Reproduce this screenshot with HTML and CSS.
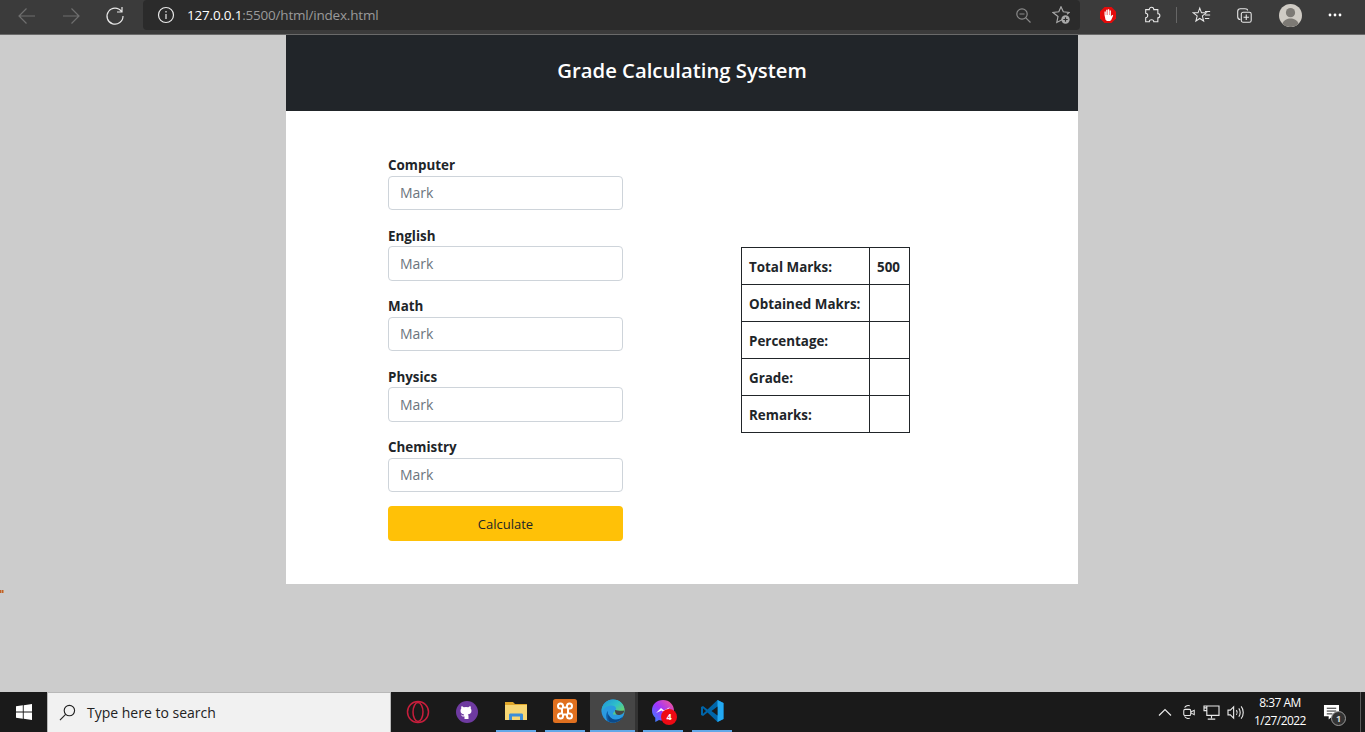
FILE: index.html
```html
<!DOCTYPE html>
<html lang="en">
  <head>
    <meta charset="utf-8">
    <title>Grade Calculating System</title>
    <link rel="stylesheet" href="styles.css">
  </head>
  <body>
    <!-- browser toolbar -->
    <div class="chrome">
      <div class="nav">
        <svg class="ic dim" viewBox="0 0 20 20"><path d="M18 10H2M9.500 2.500 2 10l7.500 7.500"/></svg>
        <svg class="ic dim" viewBox="0 0 20 20"><path d="M2 10h16M10.500 2.500 18 10l-7.500 7.500"/></svg>
        <svg class="ic" viewBox="0 0 20 20"><path d="M16.500 5.500A8 8 0 1 0 18 10M17 1v5h-5"/></svg>
      </div>
      <div class="address">
        <svg class="ic info" viewBox="0 0 18 18"><circle cx="9" cy="9" r="7.500"/><path d="M9 8v5M9 5v1.500"/></svg>
        <span class="url"><b>127.0.0.1</b>:5500/html/index.html</span>
        <span class="address-end">
          <svg class="ic zoom-ic" viewBox="0 0 15 15"><circle cx="6" cy="6" r="5.200"/><path d="M3.500 6h5M9.800 9.800 14.500 14.500"/></svg>
          <svg class="ic fav-add" viewBox="0 0 18 18"><path d="M10.500 13.500 4.800 16.500 6 10.500 1 6.500 6.800 5.800 9 .8l2.300 5 5.700.7-2 1.800"/><circle class="solid-grey" cx="13.500" cy="13.500" r="4.200"/><path class="plus" d="M13.500 11.300v4.400M11.300 13.500h4.400"/></svg>
        </span>
      </div>
      <div class="tools">
        <svg class="stop" viewBox="0 0 18 18"><path class="stop-bg" d="M5.500 1h7L17 5.500v7L12.500 17h-7L1 12.500v-7z"/><path class="stop-hand" d="M5.500 9V5.500h1.300V9h.4V3.800h1.300V9h.4V3.300h1.300V9h.4V4.500h1.300v6l1.300-1.700 1 .6-2 4.600-1.200.9H8l-1.500-1.200z"/></svg>
        <svg class="ic puzzle" viewBox="0 0 20 20"><path d="M7 4c0-3.500 5-3.500 5 0h4.500v4.500c3 0 3 4.500 0 4.500v4.500H12c0-3-5-3-5 0H3v-4.500c3 0 3-5 0-5V4z"/></svg>
        <span class="tool-sep"></span>
        <svg class="ic favs" viewBox="0 0 22 20"><path d="M9 2l2 5.500h5.500L12 11l1.500 6L9 14l-4.500 3L6 11 1.500 7.500H7zM15 6h6M15 10h6M15 14h5"/></svg>
        <svg class="ic collect" viewBox="0 0 20 20"><path d="M6 15c-2 0-3-1-3-3V6c0-2 1-3 3-3h5c2 0 3 1 3 2"/><rect x="7" y="7" width="11" height="11" rx="2"/><path d="M12.500 9.500v6M9.500 12.500h6"/></svg>
        <svg class="avatar" viewBox="0 0 24 24"><circle class="avatar-bg" cx="12" cy="12" r="12"/><circle class="avatar-fg" cx="12" cy="9" r="4.800"/><path class="avatar-fg" d="M3.500 20.500c1.500-4 5-5.500 8.500-5.500s7 1.500 8.500 5.500A12 12 0 0 1 3.500 20.500z"/></svg>
        <svg class="dots" viewBox="0 0 14 4"><circle cx="2" cy="2" r="1.400"/><circle cx="7" cy="2" r="1.400"/><circle cx="12" cy="2" r="1.400"/></svg>
      </div>
    </div>

    <!-- the page itself -->
    <main class="page">
      <span class="speck"></span>
      <section class="card">
        <h1 class="card-title">Grade Calculating System</h1>
        <div class="card-body">
          <form class="marks">
            <div class="field">
              <label for="computer">Computer</label>
              <input id="computer" type="text" placeholder="Mark">
            </div>
            <div class="field">
              <label for="english">English</label>
              <input id="english" type="text" placeholder="Mark">
            </div>
            <div class="field">
              <label for="math">Math</label>
              <input id="math" type="text" placeholder="Mark">
            </div>
            <div class="field">
              <label for="physics">Physics</label>
              <input id="physics" type="text" placeholder="Mark">
            </div>
            <div class="field">
              <label for="chemistry">Chemistry</label>
              <input id="chemistry" type="text" placeholder="Mark">
            </div>
            <button class="calc" type="button">Calculate</button>
          </form>
          <table class="result">
            <tr><th>Total Marks:</th><th class="val">500</th></tr>
            <tr><th>Obtained Makrs:</th><td class="val"></td></tr>
            <tr><th>Percentage:</th><td class="val"></td></tr>
            <tr><th>Grade:</th><td class="val"></td></tr>
            <tr><th>Remarks:</th><td class="val"></td></tr>
          </table>
        </div>
      </section>
    </main>

    <!-- windows taskbar -->
    <footer class="taskbar">
      <div class="start">
        <svg class="win" viewBox="0 0 16 16"><path d="M0 2.300 6.800 1.300V7.600H0zM7.700 1.200 16 0V7.600H7.700zM0 8.400H6.800V14.700L0 13.700zM7.700 8.400H16V16L7.700 14.800z"/></svg>
      </div>
      <div class="search">
        <svg class="ic lens" viewBox="0 0 18 18"><circle cx="11" cy="7" r="5.500"/><path d="M7 11 1 17"/></svg>
        <span>Type here to search</span>
      </div>
      <div class="apps">
        <span class="app">
          <svg viewBox="0 0 24 24"><circle class="opera" cx="12" cy="12" r="10.500"/><ellipse class="opera" cx="12" cy="12" rx="5" ry="9.500"/></svg>
        </span>
        <span class="app">
          <svg viewBox="0 0 24 24"><circle class="gh-bg" cx="12" cy="12" r="11"/><path class="gh-cat" d="M9.500 19v-2.500c-2.500.5-3-1-3.500-2 1 .3 1.500 1 2.500 1.300 0-.6.300-1 .7-1.300-2.500-.3-3.700-1.500-3.700-3.700 0-1 .3-1.700.8-2.300-.2-.6-.2-1.400.1-2.200 1 0 1.700.5 2.400 1a8 8 0 0 1 4.400 0c.7-.5 1.400-1 2.400-1 .3.800.3 1.600.1 2.200.5.600.8 1.300.8 2.300 0 2.200-1.200 3.400-3.700 3.700.5.400.7 1 .7 1.700V19z"/></svg>
        </span>
        <span class="app open">
          <svg viewBox="0 0 24 24"><path class="folder-back" d="M1 3h8l2 2h12v4H1z"/><path class="folder-front" d="M1 6h22v15H1z"/><path class="folder-blue" d="M5 21v-5c0-1 .5-1.500 1.500-1.500h11c1 0 1.500.5 1.500 1.500v5h-3v-3.500H8V21z"/></svg>
        </span>
        <span class="app open app-last">
          <svg viewBox="0 0 24 24"><rect class="xampp-bg" width="24" height="24" rx="2.500"/><path class="xampp-x" d="M9 9.500H7.500a2.500 2.500 0 1 1 2.500-2.500v1.500h4V7a2.500 2.500 0 1 1 2.500 2.500H15v5h1.500A2.500 2.500 0 1 1 14 17v-1.500h-4V17a2.500 2.500 0 1 1-2.500-2.500H9z"/></svg>
        </span>
        <span class="app open active">
          <svg viewBox="0 0 24 24"><defs><linearGradient id="edge" x1="0" y1="0" x2="1" y2=".8"><stop offset="0" stop-color="#1f8fdc"/><stop offset=".55" stop-color="#2fc0c8"/><stop offset="1" stop-color="#72d65c"/></linearGradient></defs><circle cx="12" cy="12" r="11.500" fill="#2a9ae0"/><path fill="url(#edge)" d="M12 .5c7 0 11.500 5 11.500 10.500 0 3-2.500 4.500-5 4.500H12c0-3 3-3 3-6 0-2-2-3-4.500-3C6 6.500 2 9 .8 13 .2 6 5.500.5 12 .5z"/><path fill="#464646" d="M14 11c3 .5 5 1 9.300 .5-.5 3.500-3.500 4.500-5.300 4.500-2.500 0-4-1-4-5z"/><path fill="#0f5fa8" d="M7 12c-1 5 3 9 8 9 3 0 5-1.500 7-3.500-1.500 3.500-5.500 6-10 6-2 0-4-.5-5.500-1.500C4.500 18 5 14 7 12z"/><path fill="#0b4a8a" d="M7.500 15c1 3.500 4 5.500 7.500 5.500 2.500 0 5-1 7-3-1.500 3.500-5.500 6-10 6-1 0-2-.1-3-.4C7 21 6.800 18 7.500 15z"/></svg>
        </span>
        <span class="app-sep"></span>
        <span class="app open">
          <svg viewBox="0 0 24 24"><defs><linearGradient id="msgr" x1="0" y1="1" x2="1" y2="0"><stop offset="0" stop-color="#2a8cff"/><stop offset=".5" stop-color="#a033ff"/><stop offset="1" stop-color="#ff5c87"/></linearGradient></defs><path fill="url(#msgr)" d="M12 1C5.500 1 1 5.500 1 11.500c0 3 1.200 5.500 3.300 7.300V23l3.700-2c1.200.4 2.500.5 4 .5 6.500 0 11-4.500 11-10S18.500 1 12 1z"/><path fill="#fff" d="M5 14l5-5 3 2.500L19 8l-5.500 6-3-2.500z"/></svg>
          <span class="badge">4</span>
        </span>
        <span class="app open">
          <svg viewBox="0 0 24 24"><path fill="#0065a9" d="M17.500 1 23.500 4v16l-6 3-10-9.500-4.500 3.500-2-1V8l2-1 4.500 3.500z"/><path fill="#23a9f2" d="M17.500 1 23.500 4v16l-6 3z"/><path fill="#1a1a1a" d="M17.500 7.500 11.500 12l6 4.500zM3 9.200v5.600L6 12z"/></svg>
        </span>
      </div>
      <div class="tray">
        <svg class="ic caret" viewBox="0 0 14 8"><path d="M1 7.500 7 1.500l6 6"/></svg>
        <svg class="ic meet" viewBox="0 0 16 18"><path d="M3 4C4 2 7 1 9 2M3 14c1 2 4 3 6 2"/><rect x="2" y="6" width="8" height="7" rx="1.500"/><path d="M10 9l4-2v5l-4-2"/></svg>
        <svg class="ic net" viewBox="0 0 18 16"><path d="M4 1H1v5h3M4 1h13v10H4V1zM9 11v3M5 15h8M1 3h3"/></svg>
        <svg class="ic vol" viewBox="0 0 18 16"><path d="M1 5.500h2.500L7 2v12l-3.500-3.500H1zM10 5.500c1 1.500 1 3.500 0 5M12.500 3.500c2 2.500 2 6.500 0 9M15 1.500c3 3.500 3 9.500 0 13"/></svg>
        <div class="clock">
          <span>8:37 AM</span>
          <span>1/27/2022</span>
        </div>
        <span class="notify">
          <svg viewBox="0 0 18 17"><path class="notify-fg" d="M1 1h16v12h-7l-4 3.500V13H1z"/><path class="notify-lines" d="M4 4.500h10M4 7.500h10M4 10.500h6"/></svg>
          <span class="notify-count">1</span>
        </span>
        <span class="show-desk"></span>
      </div>
    </footer>
  </body>
</html>
```

FILE: styles.css
```css
/* reset/general */
* { box-sizing: border-box; }
html, body { height: 100%; }
body { margin: 0; display: flex; flex-direction: column; height: 732px; overflow: hidden; background: #cccccc; font-family: "Open Sans", "Noto Sans", sans-serif; color: #212529; }
svg { display: block; }
.ic { fill: none; stroke: #e8e8e8; stroke-width: 1.2; }
.ic.dim { stroke: #6f6f6f; }

/* browser toolbar */
.chrome { flex: 0 0 35px; display: flex; align-items: flex-start; background: #3b3b3b; border-bottom: 1px solid #6a6a6a; }
.nav { display: flex; gap: 24px; padding: 6px 0 0 17px; width: 143px; }
.nav .ic { width: 20px; height: 20px; }
.address { width: 937px; height: 30px; display: flex; align-items: center; background: #2b2b2b; border-radius: 4px; padding-left: 14px; }
.info { width: 18px; height: 18px; }
.url { margin-left: 12px; font-size: 13.500px; color: #9a9a9a; font-family: "Open Sans", sans-serif; letter-spacing: -.2px; }
.url b { font-weight: 400; color: #ffffff; }
.address-end { margin-left: auto; display: flex; gap: 21px; align-items: center; padding-right: 10px; }
.zoom-ic { width: 15px; height: 15px; stroke: #8a8a8a; }
.fav-add { width: 18px; height: 18px; stroke: #a8a8a8; }
.solid-grey { fill: #a8a8a8; stroke: none; }
.plus { stroke: #2b2b2b; }
.tools { flex: 1; display: flex; align-items: center; height: 30px; padding-left: 19px; }
.stop { width: 18px; height: 18px; }
.stop-bg { fill: #e30b0b; }
.stop-hand { fill: #ffffff; }
.puzzle { width: 18px; height: 18px; margin-left: 26px; }
.tool-sep { width: 1px; height: 16px; background: #666666; margin: 0 15px; }
.favs { width: 19px; height: 18px; }
.collect { width: 18px; height: 18px; margin-left: 24px; }
.avatar { width: 23px; height: 23px; margin-left: 26px; }
.dots { width: 14px; height: 4px; margin-left: 26px; fill: #ffffff; }
.avatar-bg { fill: #cfcbc4; }
.avatar-fg { fill: #7d7a75; }

/* page */
.page { flex: 1; display: flex; justify-content: center; padding-right: 1px; position: relative; min-height: 0; }
.speck { position: absolute; left: 0; top: 555px; width: 4px; height: 3px; background: repeating-linear-gradient(90deg, #c0602a 0 1px, #cc9a70 1px 2px); }
.card { width: 792px; height: 549px; background: #ffffff; }
.card-title { margin: 0; height: 76px; padding-bottom: 7px; display: flex; align-items: center; justify-content: center; background: #212529; color: #ffffff; font-size: 20.300px; font-weight: 600; }
.card-body { display: flex; gap: 118px; padding: 43.900px 0 0 102px; }
.marks { width: 235px; display: flex; flex-direction: column; }
.field { display: flex; flex-direction: column; height: 70.500px; }
label { padding-top: .3px; font-size: 13.400px; font-weight: 700; line-height: 20px; height: 21px; color: #212529; }
input { height: 34.500px; padding: 0 11px 1px; border: 1px solid #ced4da; border-radius: 4px; font: inherit; font-size: 14px; background: #ffffff; }
input::placeholder { color: #6c757d; opacity: 1; }
.calc { height: 35px; margin-top: -1.400px; border: 0; border-radius: 4px; background: #ffc107; color: #212529; font: inherit; font-size: 13px; }

/* result table */
.result { border-collapse: collapse; align-self: flex-start; margin-top: 92px; font-size: 13.400px; }
.result th, .result td { height: 37px; padding: 3px 7px 0; border: 1px solid #212529; text-align: left; font-weight: 700; white-space: nowrap; }
.result th:first-child { width: 128px; }
.result .val { width: 40px; }

/* taskbar */
.taskbar { flex: 0 0 40px; display: flex; background: #1a1a1a; color: #ffffff; }
.start { width: 47px; display: flex; align-items: center; justify-content: center; }
.win { width: 16px; height: 16px; fill: #ffffff; }
.search { width: 344px; display: flex; align-items: center; gap: 11px; padding-left: 11px; background: #f1f1f1; border: 1px solid #b8b8b8; border-width: 1px 1px 0; color: #222222; font-size: 14px; }
.lens { width: 17px; height: 17px; stroke: #222222; }
.apps { display: flex; padding-left: 7px; }
.app { position: relative; width: 40px; margin-right: 9px; display: flex; align-items: center; justify-content: center; }
.app svg { width: 24px; height: 24px; }
.app.open { border-bottom: 2px solid #63a8e8; }
.app.app-last { margin-right: 5px; }
.app.active { background: #464646; margin-right: 0; width: 45px; }
.app-sep { width: 3px; background: #333333; margin-right: 5px; }
.opera { fill: none; stroke: #c81e3c; stroke-width: 1.500; }
.gh-bg { fill: #6e3aa0; }
.gh-cat { fill: #ffffff; }
.folder-back { fill: #e0a72a; }
.folder-front { fill: #f7d774; }
.folder-blue { fill: #3d8ed8; }
.xampp-bg { fill: #e0701f; }
.xampp-x { fill: none; stroke: #ffffff; stroke-width: 2; }
.badge { position: absolute; left: 18px; top: 17px; width: 16px; height: 16px; border-radius: 50%; background: #ee0a14; color: #ffffff; font-size: 9px; font-weight: 700; line-height: 16px; text-align: center; }
.tray { margin-left: auto; display: flex; align-items: center; }
.caret { width: 14px; height: 8px; }
.meet { width: 14px; height: 16px; margin-left: 10px; }
.net { width: 17px; height: 15px; margin-left: 7px; }
.vol { width: 17px; height: 15px; margin-left: 7px; }
.clock { width: 60px; margin-left: 6px; display: flex; flex-direction: column; align-items: center; font-size: 12px; line-height: 18px; letter-spacing: -.55px; }
.notify { position: relative; width: 17px; margin-left: 13px; }
.notify svg { width: 17px; height: 16px; }
.notify-fg { fill: #ffffff; }
.notify-lines { stroke: #1a1a1a; stroke-width: 1; fill: none; }
.notify-count { position: absolute; left: 8px; top: 7px; width: 15px; height: 15px; border: 1px solid #9a9a9a; border-radius: 50%; background: #333333; color: #dddddd; font-size: 9px; font-weight: 700; line-height: 13px; text-align: center; }
.show-desk { width: 1px; height: 40px; margin-left: 20px; margin-right: 4px; background: #5a5a5a; }
```
